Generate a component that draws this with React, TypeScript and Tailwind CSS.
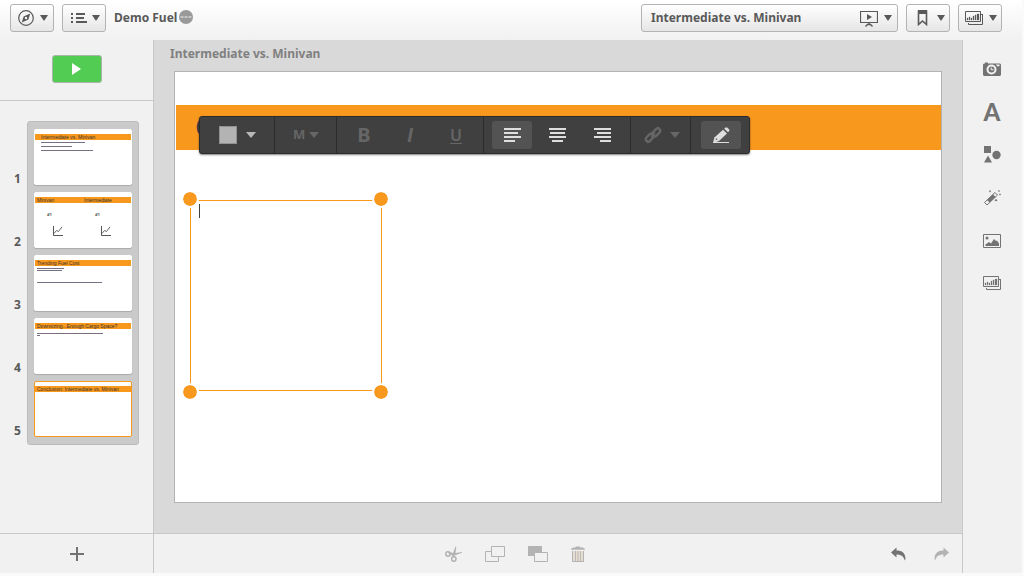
import React from "react";

type IconProps = { className?: string };

function Caret({ className = "" }: IconProps) {
  return (
    <svg viewBox="0 0 8 6" className={`h-[6px] w-2 shrink-0 ${className}`} fill="currentColor" aria-hidden="true">
      <path d="M0 0h8L4.4 5.6h-.8z" />
    </svg>
  );
}

function WideCaret({ className = "" }: IconProps) {
  return (
    <svg viewBox="0 0 10 6" className={`h-[6px] w-[10px] shrink-0 ${className}`} fill="currentColor" aria-hidden="true">
      <path d="M0 0h10L5 6z" />
    </svg>
  );
}

function CompassIcon() {
  return (
    <svg viewBox="0 0 16 16" className="size-4" aria-hidden="true">
      <circle cx="8" cy="8" r="7.3" fill="none" stroke="currentColor" strokeWidth="1.2" />
      <path d="M12.200 3.600 10.400 9.600 3.800 12.600 5.600 6.400z" fill="currentColor" />
      <circle cx="8" cy="8" r="1.2" fill="#f7f7f7" />
    </svg>
  );
}

function ListIcon() {
  return (
    <svg viewBox="0 0 18 12" className="h-3 w-[18px]" fill="currentColor" aria-hidden="true">
      <path d="M1 1h2v2H1zM6 1h9v2H6zM1 5h2v2H1zM6 5h8v2H6zM1 9h2v2H1zM6 9h11v2H6z" />
    </svg>
  );
}

function PresentIcon() {
  return (
    <svg viewBox="0 0 18 17" className="h-[17px] w-[18px]" aria-hidden="true">
      <path d="M.5 1.500h17v11H.5z" fill="none" stroke="currentColor" strokeWidth="1.200" />
      <path d="M7 4v6l5-3z" fill="currentColor" />
      <path d="M9 12.500v2M5.500 16.500l2-2h3l2 2" fill="none" stroke="currentColor" strokeWidth="1.400" />
    </svg>
  );
}

function BookmarkIcon() {
  return (
    <svg viewBox="0 0 11 16" className="h-4 w-[11px]" aria-hidden="true">
      <path d="M1.500 1h8v13.500l-4-3.500-4 3.500z" fill="none" stroke="currentColor" strokeWidth="1.600" />
      <path d="M1 0h9v4H1z" fill="currentColor" />
    </svg>
  );
}

function SheetsIcon() {
  return (
    <svg viewBox="0 0 19 15" className="h-[15px] w-[19px]" aria-hidden="true">
      <path d="M.5.500h15v10H.5z" fill="none" stroke="currentColor" />
      <path d="M17.500 3v10.500h-14V12M16 3.500h2" fill="none" stroke="currentColor" />
      <path d="M2 7h1v2H2zM4 6h1v3H4zM6 7h1v2H6zM8 5h1v4H8zM10 4h1v5h-1zM12 3h2v6h-2z" fill="currentColor" stroke="currentColor" strokeWidth=".3" />
    </svg>
  );
}

function CameraIcon() {
  return (
    <svg viewBox="0 0 18 14" className="h-[14px] w-[18px]" aria-hidden="true">
      <path d="M1 1.500h1V.500h3v1h12l1 1V13l-1 1H1l-1-1V2.500z" fill="currentColor" />
      <circle cx="8.500" cy="7.500" r="4" fill="none" stroke="#f1f1f1" strokeWidth="2" />
      <path d="M8.200 5.500v2.200h2.300" fill="none" stroke="#f1f1f1" />
      <path d="M13 2.500h3.500v1.800H14z" fill="#f1f1f1" />
    </svg>
  );
}

function ShapesIcon() {
  return (
    <svg viewBox="0 0 18 17" className="h-[17px] w-[18px]" fill="currentColor" aria-hidden="true">
      <path d="M1 0h7v7H1zM5 9.500 9 16.500H1z" />
      <circle cx="13.500" cy="9" r="4.200" />
    </svg>
  );
}

function WandIcon() {
  return (
    <svg viewBox="0 0 18 16" className="h-4 w-[18px]" aria-hidden="true">
      <path d="m1.500 12.500 10.500-10 2.500 2.500L4 15z" fill="none" stroke="currentColor" />
      <path d="m4 10 6-5.700 2.600 2.600-6 5.600z" fill="currentColor" />
      <path d="m7 0 1 1.200L7 2.400 6 1.200zM15 1l1-1 1 1-1 1zM13 9l1.500 1.300L13 11.600l-1.500-1.300zM17 3.500l1 1-1 1-1-1z" fill="currentColor" />
    </svg>
  );
}

function ImageIcon() {
  return (
    <svg viewBox="0 0 18 14" className="h-[14px] w-[18px]" aria-hidden="true">
      <path d="M.5.500h17v13H.5z" fill="none" stroke="currentColor" />
      <circle cx="4" cy="4" r="1.500" fill="currentColor" />
      <path d="M2.500 12V10.500L6 8l2 1.500L11 5l2 2 1-.5 2 3V12z" fill="currentColor" />
    </svg>
  );
}

function LinkIcon() {
  return (
    <svg viewBox="0 0 18 18" className="size-[18px]" fill="none" stroke="currentColor" strokeWidth="2.4" aria-hidden="true">
      <path d="m8 7.500 4.300-4.800 1.800-.7 2 2v1.700l-3.600 4-2 .8-1.600-1.600" />
      <path d="m10 10.500-4.300 4.800-1.700.7-2.200-2V12.300l3.700-4 2-.8 1.600 1.600" />
      <path d="M7 11 11 7" strokeWidth="1.400" />
    </svg>
  );
}

function PencilIcon() {
  return (
    <svg viewBox="0 0 18 17" className="h-[17px] w-[18px]" fill="currentColor" aria-hidden="true">
      <path d="m11 2.800 4 3.600L7 14l-6 2 1.400-5.400z" />
      <path d="m12.200 1.800 1.200-1.300h1.800l2 2v1.500L16 5.300z" />
      <path d="M1 15h16v1H1z" />
      <circle cx="4.500" cy="12.200" r=".8" fill="#535353" />
    </svg>
  );
}

function ScissorsIcon() {
  return (
    <svg viewBox="0 0 17 16" className="h-4 w-[17px]" aria-hidden="true">
      <g fill="none" stroke="currentColor" strokeWidth="1.500">
        <circle cx="3" cy="8" r="2.200" />
        <circle cx="8.800" cy="13" r="2.200" />
      </g>
      <path d="M2.500 5.600 8 7l2.500-6.500.8.200-.8 6.300 6.500-1v.8L9.500 9.600l-.2 1.600H7.700L7 9 4.500 8.500z" fill="currentColor" />
    </svg>
  );
}

function BringForwardIcon() {
  return (
    <svg viewBox="0 0 20 16" className="h-4 w-5" aria-hidden="true">
      <path d="M6 5.500H.5v10h13v-5" fill="none" stroke="currentColor" />
      <path d="M6.500.500h13v10h-13z" fill="none" stroke="currentColor" />
    </svg>
  );
}

function SendBackIcon() {
  return (
    <svg viewBox="0 0 20 16" className="h-4 w-5" aria-hidden="true">
      <path d="M0 0h14v10H0z" fill="currentColor" />
      <path d="M6.500 6.500h13v9h-13z" fill="#f1f1f1" stroke="currentColor" />
    </svg>
  );
}

function TrashIcon() {
  return (
    <svg viewBox="0 0 14 16" className="h-4 w-[14px]" aria-hidden="true">
      <path d="M0 3.800V3l2-1.500h2.500L5 .5h4l.5 1H12L14 3v.8z" fill="currentColor" />
      <path d="M1 5h12v11H1z" fill="#e6dccf" />
      <path d="M1.500 5v10.500h11V5" fill="none" stroke="currentColor" />
      <path d="M4.500 5v10M7 5v10M9.500 5v10" stroke="currentColor" strokeWidth=".9" />
    </svg>
  );
}

function UndoIcon({ className = "" }: IconProps) {
  return (
    <svg viewBox="0 0 15 14" className={`h-[14px] w-[15px] ${className}`} fill="currentColor" aria-hidden="true">
      <path d="M0 5.500 5.500.5v3C11 3.500 14.500 6 14.500 12l-.8 1.500C13 9.500 10 7.500 5.500 7.500v3z" />
    </svg>
  );
}

function MiniChart() {
  return (
    <svg viewBox="0 0 10 10" className="size-[10px]" fill="none" stroke="#555" aria-hidden="true">
      <path d="M.5 0v9.500H10" />
      <path d="m1 7.500 2.500-3 2 1L9 .8" strokeWidth=".9" />
    </svg>
  );
}

const headerButton =
  "flex h-7 items-center rounded-[3px] border border-[#b3b3b3] bg-linear-to-b from-white to-[#e6e6e6] text-[#595959]";

function TextRule({ width }: { width: number }) {
  return <div className="h-px bg-[#777080]" style={{ width }} />;
}

function Thumb({ titles, selected, indent, children }: { titles: string[]; selected?: boolean; indent?: boolean; children?: React.ReactNode }) {
  return (
    <button
      type="button"
      aria-label={titles.join(", ")}
      className={`flex h-14 w-full flex-col overflow-hidden rounded-[2px] border bg-white text-left ${
        selected ? "border-[#f8981d]" : "border-white shadow-[0_1px_1px_#aaa]"
      }`}
    >
      <span className={`mt-1 grid h-[6px] w-full grid-flow-col items-center bg-[#f8981d] ${indent ? "pl-[6px]" : "pl-[2px]"} font-['Liberation_Sans'] text-[5px] leading-[6px] whitespace-nowrap text-[#333] ${titles.length > 1 ? "grid-cols-2" : ""}`}>
        {titles.map((t) => (
          <span key={t}>{t}</span>
        ))}
      </span>
      {children}
    </button>
  );
}

function AlignIcon({ kind }: { kind: "left" | "center" | "right" }) {
  const d = {
    left: "M0 0h17v2H0zM0 4h14v2H0zM0 8h17v2H0zM0 12h11v2H0z",
    center: "M0 0h17v2H0zM1 4h15v2H1zM0 8h17v2H0zM3 12h11v2H3z",
    right: "M0 0h17v2H0zM3 4h14v2H3zM0 8h17v2H0zM6 12h11v2H6z",
  }[kind];
  return (
    <svg viewBox="0 0 17 14" className="h-[14px] w-[17px]" fill="#dedede" aria-hidden="true">
      <path d={d} />
    </svg>
  );
}

const toolButton = "flex h-7 w-10 items-center justify-center rounded-[3px]";
const divider = "border-r border-[#2c2c2c]";

function FormatToolbar() {
  return (
    <div
      role="toolbar"
      aria-label="Text formatting"
      className="absolute top-11 left-6 z-10 flex h-[38px] w-[551px] rounded-[3px] border border-[#2c2c2c] bg-[#404040] text-[#666] shadow-[0_1px_2px_rgba(0,0,0,0.5)]"
    >
      <button type="button" aria-label="Text colour" className={`flex w-[75px] items-center gap-[9px] pl-[19px] text-[#b8b8b8] ${divider}`}>
        <span className="size-[18px] border border-[#929292] bg-[#b3b3b3]" />
        <WideCaret />
      </button>
      <button type="button" aria-label="Font size" className={`flex w-[62px] items-center gap-1 pl-[18px] text-[13px] font-bold ${divider}`}>
        M
        <WideCaret />
      </button>
      <div className={`flex w-[147px] items-center justify-between px-[7px] ${divider}`}>
        <button type="button" className={`${toolButton} text-xl font-bold`}>B</button>
        <button type="button" className={`${toolButton} font-['Liberation_Sans'] text-xl font-bold italic`}>I</button>
        <button type="button" className={`${toolButton} text-base font-semibold underline decoration-1 underline-offset-2`}>U</button>
      </div>
      <div className={`flex w-[147px] items-center justify-between px-2 ${divider}`}>
        <button type="button" aria-label="Align left" className={`${toolButton} bg-[#535353]`}><AlignIcon kind="left" /></button>
        <button type="button" aria-label="Align center" className={toolButton}><AlignIcon kind="center" /></button>
        <button type="button" aria-label="Align right" className={toolButton}><AlignIcon kind="right" /></button>
      </div>
      <button type="button" aria-label="Link" className={`flex w-[60px] items-center gap-2 pl-[13px] ${divider}`}>
        <LinkIcon />
        <WideCaret />
      </button>
      <div className="flex flex-1 items-center justify-center pl-[2px]">
        <button type="button" aria-label="Edit" className={`${toolButton} bg-[#535353] text-[#dedede]`}><PencilIcon /></button>
      </div>
    </div>
  );
}

const handle = "absolute size-4 rounded-full border border-white bg-[#f8981d] bg-clip-padding ring-1 ring-white";

const objectTools = [
  { label: "Snapshot library", icon: <CameraIcon /> },
  { label: "Text objects", icon: <span className="font-['Lato'] text-2xl leading-6 font-black">A</span> },
  { label: "Shapes", icon: <ShapesIcon /> },
  { label: "Effects library", icon: <WandIcon /> },
  { label: "Media objects", icon: <ImageIcon /> },
  { label: "Sheet library", icon: <SheetsIcon /> },
];

export default function App() {
  return (
    <div className="flex min-h-screen flex-col bg-[#fafafa] pr-[2px] pb-[3px] font-['Noto_Sans',sans-serif] text-[#595959]">
      <header className="flex h-10 items-start bg-linear-to-b from-white to-[#f1f1f1] pt-1 pr-5 pl-[10px]">
        <button type="button" aria-label="Navigation" className={`${headerButton} w-11 gap-[6px] pl-[7px]`}>
          <CompassIcon />
          <Caret />
        </button>
        <button type="button" aria-label="Menu" className={`${headerButton} ml-2 w-11 gap-1 pl-[7px]`}>
          <ListIcon />
          <Caret />
        </button>
        <span className="ml-2 text-xs leading-[27px] font-bold whitespace-nowrap">Demo Fuel</span>
        <button type="button" aria-label="App details" className="mt-[6px] ml-[2px] size-[14px] rounded-full bg-[#999]">
          <svg viewBox="0 0 14 14" className="size-[14px]" fill="#f1f1f1" aria-hidden="true">
            <path d="M1.500 6.500h3v1h-3zM5.500 6.500h3v1h-3zM9.500 6.500h3v1h-3z" />
          </svg>
        </button>
        <button type="button" className={`${headerButton} ml-auto w-[257px] pr-[5px] pl-[9px] text-xs font-bold`}>
          <span className="flex-1 text-left">Intermediate vs. Minivan</span>
          <PresentIcon />
          <Caret className="ml-[6px]" />
        </button>
        <button type="button" aria-label="Bookmarks" className={`${headerButton} ml-2 w-11 gap-[9px] pl-[10px]`}>
          <BookmarkIcon />
          <Caret />
        </button>
        <button type="button" aria-label="Sheets" className={`${headerButton} ml-2 w-11 gap-[5px] pl-[6px]`}>
          <SheetsIcon />
          <Caret />
        </button>
      </header>

      <div className="flex flex-1 bg-[#f1f1f1]">
        <aside className="flex w-[154px] shrink-0 flex-col border-r border-[#c8c8c8]">
          <div className="flex h-[61px] items-start justify-center border-b border-[#c8c8c8] pt-[15px]">
            <button type="button" aria-label="Play the story" className="flex h-7 w-[50px] items-center justify-center rounded-[3px] border border-[#a9b5a9] bg-[#52cc52]">
              <svg viewBox="0 0 9 12" className="h-3 w-[9px]" fill="#fff" aria-hidden="true">
                <path d="M0 0v12l9-6z" />
              </svg>
            </button>
          </div>
          <div className="flex flex-1 items-start pt-5 pr-[14px]">
            <div className="grid w-[27px] shrink-0 gap-[7px] pt-[9px] pl-[14px] text-xs font-bold">
              {[1, 2, 3, 4, 5].map((n) => (
                <span key={n} className="flex h-14 items-end leading-[14px]">{n}</span>
              ))}
            </div>
            <div className="grid flex-1 gap-[7px] rounded-[3px] border border-[#bcbcbc] bg-[#cacaca] px-[6px] py-[7px]">
              <Thumb titles={["Intermediate vs. Minivan"]} indent>
                <span className="flex flex-col gap-[3px] pt-[2px] pl-[6px]">
                  <TextRule width={44} />
                  <TextRule width={31} />
                  <TextRule width={52} />
                </span>
              </Thumb>
              <Thumb titles={["Minivan", "Intermediate"]}>
                <span className="flex w-full gap-[43px] pt-[9px] pl-3 text-[4px] leading-[6px] font-bold">
                  <span className="w-[5px]">#1</span>
                  <span className="w-[5px]">#1</span>
                </span>
                <span className="flex w-full gap-[38px] pt-2 pl-[18px]">
                  <MiniChart />
                  <MiniChart />
                </span>
              </Thumb>
              <Thumb titles={["Trending Fuel Cost"]}>
                <span className="flex flex-col gap-px pt-[2px] pl-[2px]">
                  <TextRule width={27} />
                  <TextRule width={25} />
                </span>
                <span className="pt-[11px] pl-[2px]"><TextRule width={65} /></span>
              </Thumb>
              <Thumb titles={["Downsizing...Enough Cargo Space?"]}>
                <span className="flex flex-col gap-px pt-1 pl-[2px]">
                  <TextRule width={66} />
                  <TextRule width={3} />
                </span>
              </Thumb>
              <Thumb titles={["Conclusion: Intermediate vs. Minivan"]} selected />
            </div>
          </div>
          <div className="flex h-10 items-center justify-center border-t border-[#c8c8c8]">
            <button type="button" aria-label="Add slide" className="text-[#737373]">
              <svg viewBox="0 0 14 14" className="size-[14px]" fill="currentColor" aria-hidden="true">
                <path d="M6 0h2v6h6v2H8v6H6V8H0V6h6z" />
              </svg>
            </button>
          </div>
        </aside>

        <main className="flex min-w-0 flex-1 flex-col bg-[#d9d9d9]">
          <div className="flex-1 px-5">
            <h1 className="-ml-1 h-[31px] text-xs leading-[27px] font-bold text-[#808080]">Intermediate vs. Minivan</h1>
            <section aria-label="Slide 5" className="relative aspect-video border border-[#b3b3b3] bg-white pt-[33px] pl-px">
              <h2 className="h-[45px] overflow-hidden bg-[#f8981d] pl-[19px] text-[28px] leading-[42px] text-[#404040]" aria-label="Conclusion: Intermediate vs. Minivan">
                C
              </h2>
              <FormatToolbar />
              <div className="absolute top-32 left-[15px] h-[191px] w-48 border border-[#f8981d]">
                <textarea aria-label="Paragraph" className="block size-full resize-none bg-transparent p-2 text-sm caret-transparent outline-none" />
                <span className="absolute top-[3px] left-2 h-[14px] w-px bg-[#404040]" />
                <span className={`${handle} -top-[10px] -left-[9px]`} />
                <span className={`${handle} -top-[10px] -right-2`} />
                <span className={`${handle} -bottom-[10px] -left-[9px]`} />
                <span className={`${handle} -right-2 -bottom-[10px]`} />
              </div>
            </section>
          </div>
          <footer className="grid h-10 grid-cols-[1fr_auto_1fr] items-center border-t border-[#c8c8c8] bg-[#f1f1f1]">
            <span />
            <div className="mr-[86px] flex items-center gap-[23px] text-[#b3b3b3]">
              <button type="button" aria-label="Cut"><ScissorsIcon /></button>
              <button type="button" aria-label="Bring to front"><BringForwardIcon /></button>
              <button type="button" aria-label="Send to back"><SendBackIcon /></button>
              <button type="button" aria-label="Delete"><TrashIcon /></button>
            </div>
            <div className="flex justify-end gap-7 pr-[13px]">
              <button type="button" aria-label="Undo" className="text-[#737373]"><UndoIcon /></button>
              <button type="button" aria-label="Redo" className="text-[#b3b3b3]"><UndoIcon className="-scale-x-100" /></button>
            </div>
          </footer>
        </main>

        <aside className="w-[60px] shrink-0 border-l border-[#c8c8c8] pt-[7px] pr-px text-[#737373]">
          {objectTools.map((tool) => (
            <button key={tool.label} type="button" aria-label={tool.label} className="flex h-[43px] w-full items-center justify-center">
              {tool.icon}
            </button>
          ))}
        </aside>
      </div>
    </div>
  );
}
